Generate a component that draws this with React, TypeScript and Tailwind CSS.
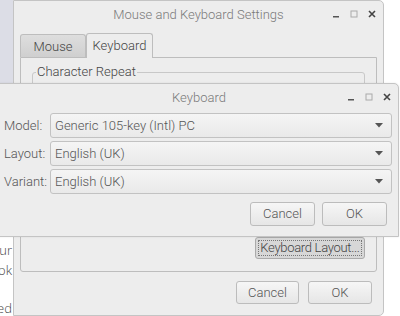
import React from "react";

const font = { fontFamily: "Roboto, 'Liberation Sans', sans-serif" };

function Controls({ className = "" }: { className?: string }) {
  return (
    <div className={"flex items-center " + className}>
      <svg width="8" height="8" viewBox="0 0 8 8" className="mr-[10px]">
        <rect x="1" y="6" width="6" height="1.5" fill="#555" />
      </svg>
      <svg width="8" height="8" viewBox="0 0 8 8" className="mr-[10px]">
        <rect x="1" y="1" width="6" height="6" fill="none" stroke="#aaa" strokeWidth="1" />
      </svg>
      <svg width="8" height="8" viewBox="0 0 8 8">
        <path d="M1 1 L7 7 M7 1 L1 7" stroke="#444" strokeWidth="1.6" />
      </svg>
    </div>
  );
}

function Btn({ children, className = "" }: { children: React.ReactNode; className?: string }) {
  return (
    <div
      className={
        "flex items-center justify-center rounded-[3px] border border-[#bcbcbc] bg-gradient-to-b from-[#f6f6f6] to-[#e6e6e6] text-[13px] text-[#555] " +
        className
      }
    >
      {children}
    </div>
  );
}

function Combo({ label, value }: { label: string; value: string }) {
  return (
    <div className="flex items-center h-[25px]">
      <div className="w-[50px] pl-[4px] text-[13px] text-[#555]">{label}</div>
      <div className="flex-1 h-[25px] mr-[6px] flex items-center justify-between rounded-[3px] border border-[#c2c2c2] bg-gradient-to-b from-[#f5f5f5] to-[#e9e9e9] pl-[4px] pr-[8px] text-[13px] text-[#555]">
        <span>{value}</span>
        <svg width="8" height="5" viewBox="0 0 8 5">
          <path d="M0 0 L8 0 L4 4.5 Z" fill="#555" />
        </svg>
      </div>
    </div>
  );
}

export default function App() {
  return (
    <div className="relative w-[400px] h-[316px] overflow-hidden bg-white font-light" style={font}>
      {/* background left strip */}
      <div className="absolute left-0 top-0 w-[13px] h-[316px] flex flex-col">
        <div className="h-[83px] bg-[#dcdde6]" />
        <div className="flex-1 bg-white relative text-[13px] text-[#444]" style={{ fontFamily: "'Open Sans', sans-serif" }}>
          <div className="absolute right-[1px] top-[161px] leading-none whitespace-nowrap">ur</div>
          <div className="absolute right-[1px] top-[181px] leading-none whitespace-nowrap">ok</div>
          <div className="absolute right-[1px] top-[219px] leading-none whitespace-nowrap">ed</div>
        </div>
      </div>

      {/* back window */}
      <div className="absolute left-[13px] top-0 w-[371px] h-[316px] border border-[#c4c4c4] rounded-tr-[5px] rounded-br-[5px] bg-[#ededed] flex flex-col">
        <div className="relative h-[27px] flex items-center justify-center text-[13px] text-[#7a7a7a]">
          <span>Mouse and Keyboard Settings</span>
          <Controls className="absolute right-[7px] top-[9px]" />
        </div>
        <div className="ml-[6px] mr-[6px] flex flex-col">
          <div className="flex items-end h-[27px] mt-[2px]">
            <div className="w-[66px] h-[23px] border border-[#bdbdbd] border-b-0 rounded-t-[3px] bg-gradient-to-b from-[#dedede] to-[#cfcfcf] flex items-center justify-center text-[13px] text-[#444] pt-[2px]">
              Mouse
            </div>
            <div className="w-[67px] h-[25px] -mb-[1px] z-10 border border-[#bdbdbd] border-b-0 rounded-t-[3px] bg-[#ededed] flex items-center justify-center text-[13px] text-[#444]">
              Keyboard
            </div>
          </div>
          <div className="h-[215px] border border-[#bdbdbd] rounded-b-[3px] flex flex-col px-[11px] pt-[14px] pb-[12px]">
            <div className="relative h-[140px] border border-[#c8c8c8] rounded-[3px]">
              <span className="absolute left-[3px] -top-[8px] px-[1px] bg-[#ededed] text-[13px] text-[#444] leading-none">
                Character Repeat
              </span>
            </div>
            <div className="flex justify-end mt-auto">
              <div className="w-[110px] h-[22px] rounded-[3px] border border-[#aaa] bg-[#d7d7d7] p-[2px]">
                <div className="w-full h-full border border-dotted border-[#777] flex items-center justify-center text-[13px] tracking-[-0.3px] whitespace-nowrap text-[#444]">
                  Keyboard Layout...
                </div>
              </div>
            </div>
          </div>
          <div className="flex justify-end gap-[9px] mt-[9px] mr-[5px]">
            <Btn className="w-[63px] h-[23px]">Cancel</Btn>
            <Btn className="w-[64px] h-[23px]">OK</Btn>
          </div>
        </div>
      </div>

      {/* front window */}
      <div className="absolute -left-[1px] top-[83px] w-[400px] h-[154px] border border-[#c4c4c4] rounded-tr-[5px] bg-[#ededed] flex flex-col shadow-[0_0_2px_rgba(0,0,0,0.1)]">
        <div className="relative h-[28px] flex items-center justify-center text-[13px] text-[#7a7a7a]">
          <span>Keyboard</span>
          <Controls className="absolute right-[7px] top-[9px]" />
        </div>
        <div className="flex flex-col gap-[3px] mt-[1px]">
          <Combo label="Model:" value="Generic 105-key (Intl) PC" />
          <Combo label="Layout:" value="English (UK)" />
          <Combo label="Variant:" value="English (UK)" />
        </div>
        <div className="flex justify-end gap-[7px] mt-[8px] mr-[11px]">
          <Btn className="w-[65px] h-[24px]">Cancel</Btn>
          <Btn className="w-[65px] h-[24px]">OK</Btn>
        </div>
      </div>
    </div>
  );
}
